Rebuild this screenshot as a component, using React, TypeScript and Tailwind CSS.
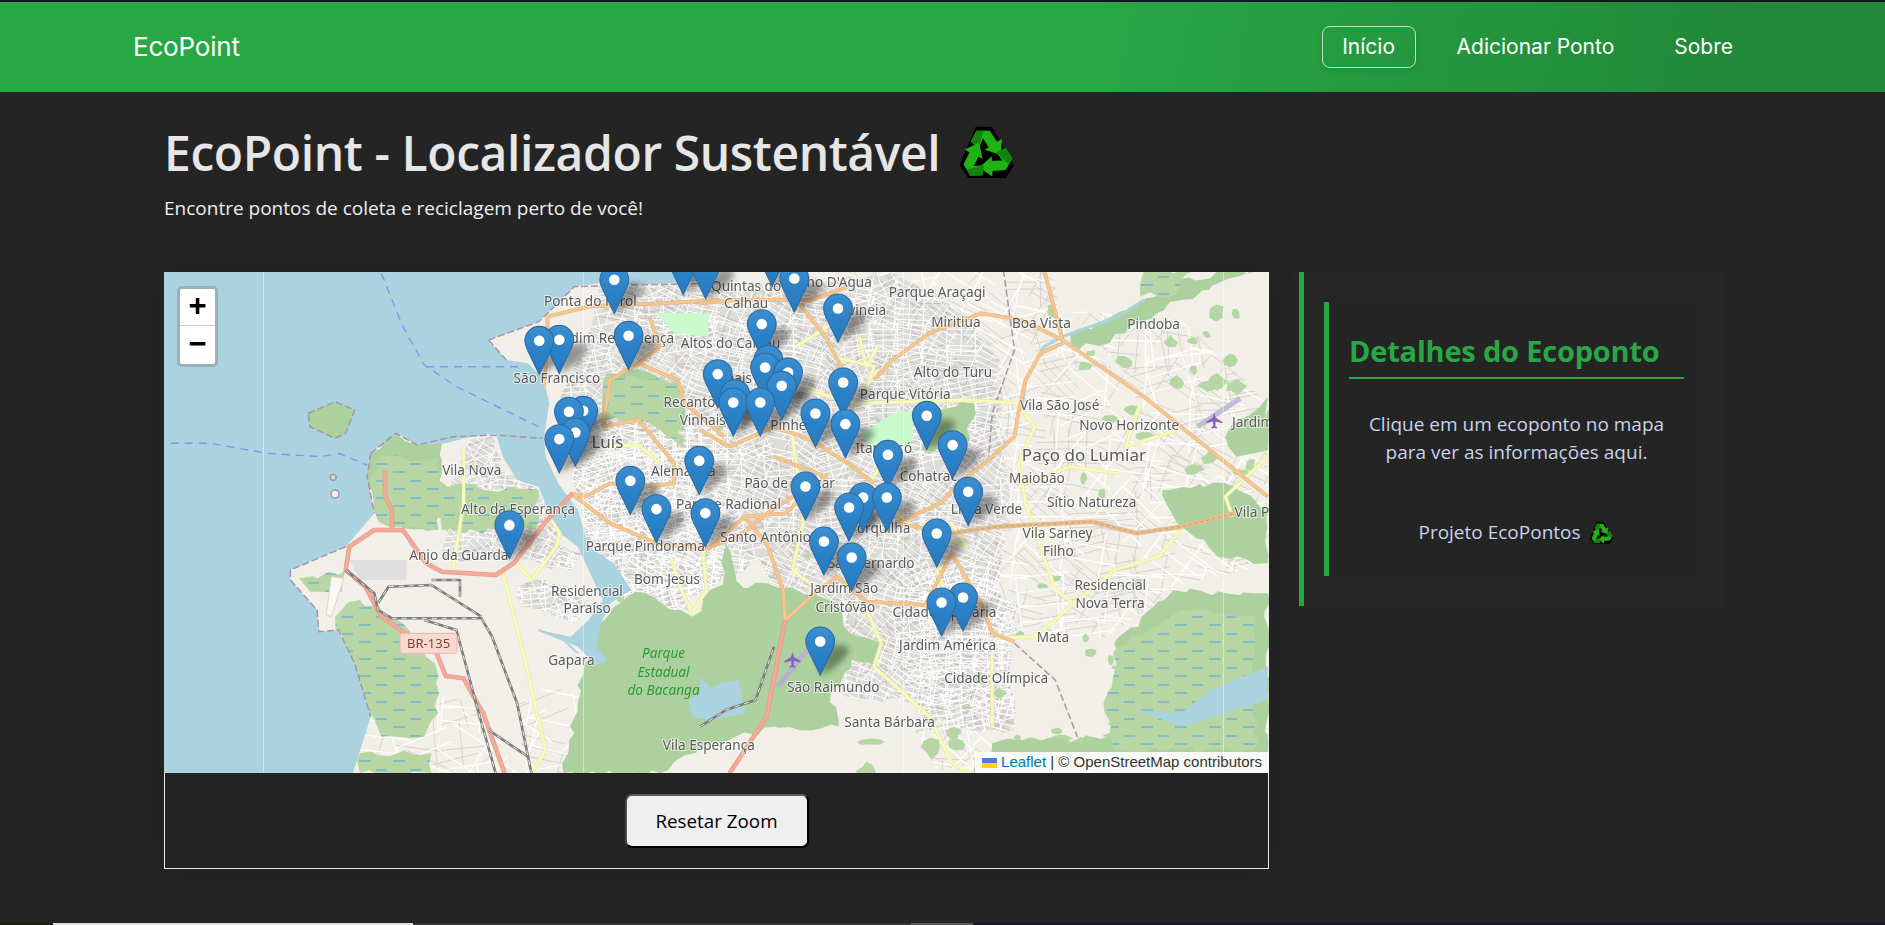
import React from "react";

type Pt = number[];
const z4 = (a: Pt) => { const o: string[] = []; for (let i = 0; i < a.length; i += 2) o.push(`${(160 + a[i] / 2.8).toFixed(1)},${(270 + a[i + 1] / 3).toFixed(1)}`); return o.join(" "); };
const z5 = (a: Pt) => { const o: string[] = []; for (let i = 0; i < a.length; i += 2) o.push(`${(700 + a[i] / 2.703).toFixed(1)},${(270 + a[i + 1] / 3).toFixed(1)}`); return o.join(" "); };
const X4 = (x: number) => 160 + x / 2.8;
const X5 = (x: number) => 700 + x / 2.703;
const Y = (y: number) => 270 + y / 3;

function makeRng(seed: number) {
  let s = seed;
  return () => { s = (s * 16807) % 2147483647; return (s - 1) / 2147483646; };
}
const rr = makeRng(4242);
function rough(points: string, step = 9, amp = 3) {
  const n = points.trim().split(/[\s,]+/).map(Number);
  const out: string[] = [];
  const c = n.length / 2;
  for (let i = 0; i < c; i++) {
    const x0 = n[2 * i], y0 = n[2 * i + 1];
    const x1 = n[(2 * i + 2) % n.length], y1 = n[(2 * i + 3) % n.length];
    const d = Math.hypot(x1 - x0, y1 - y0);
    const k = Math.max(1, Math.floor(d / step));
    for (let j = 0; j < k; j++) {
      const t = j / k;
      const jx = j === 0 ? 0 : (rr() - 0.5) * 2 * amp;
      const jy = j === 0 ? 0 : (rr() - 0.5) * 2 * amp;
      out.push(`${(x0 + (x1 - x0) * t + jx).toFixed(1)},${(y0 + (y1 - y0) * t + jy).toFixed(1)}`);
    }
  }
  return out.join(" ");
}
function streets(x0: number, y0: number, x1: number, y1: number, cell: number, gap: number, seed: number, skip: number) {
  const r = makeRng(seed);
  let d = "";
  for (let cy = y0; cy < y1; cy += cell) {
    for (let cx = x0; cx < x1; cx += cell) {
      const a = (r() * 70 - 25) * Math.PI / 180;
      const ca = Math.cos(a), sa = Math.sin(a);
      const mx = cx + cell / 2, my = cy + cell / 2, h = cell * 0.62;
      for (let u = -h; u <= h; u += gap) {
        if (r() < skip) continue;
        d += `M${(mx + ca * -h - sa * u).toFixed(1)} ${(my + sa * -h + ca * u).toFixed(1)}L${(mx + ca * h - sa * u).toFixed(1)} ${(my + sa * h + ca * u).toFixed(1)}`;
      }
      for (let u = -h; u <= h; u += gap * 2.6) {
        if (r() < skip) continue;
        d += `M${(mx - sa * -h + ca * u).toFixed(1)} ${(my + ca * -h + sa * u).toFixed(1)}L${(mx - sa * h + ca * u).toFixed(1)} ${(my + ca * h + sa * u).toFixed(1)}`;
      }
    }
  }
  return d;
}
function blobs(x0: number, y0: number, x1: number, y1: number, n: number, seed: number, size: number) {
  const r = makeRng(seed);
  const out: string[] = [];
  for (let i = 0; i < n; i++) {
    const cx = x0 + r() * (x1 - x0), cy = y0 + r() * (y1 - y0);
    const w = size * (0.5 + r()), h = size * (0.4 + r() * 0.8), k = 8;
    const p: string[] = [];
    for (let j = 0; j < k; j++) {
      const t = (j / k) * Math.PI * 2, q = 0.6 + r() * 0.6;
      p.push(`${(cx + Math.cos(t) * w * q).toFixed(1)},${(cy + Math.sin(t) * h * q).toFixed(1)}`);
    }
    out.push(p.join(" "));
  }
  return out;
}

const water = "#aad3df";

const waterPoly = z4([0,0, 1557,0, 1540,30, 1430,40, 1320,45, 1230,40, 1160,50, 1085,130, 1060,155, 920,210, 970,270, 1030,280, 1075,330, 1090,400, 1075,500, 1080,560, 1115,640, 1170,720, 1200,830, 1270,880, 1320,960, 1260,1000, 1235,1060, 1220,1130, 1255,1170, 1220,1185, 1170,1130, 1060,1080, 1150,1100, 1200,1050, 1240,990, 1200,900, 1170,830, 1120,790, 1090,730, 1060,650, 1000,630, 960,560, 940,490, 870,500, 800,520, 720,525, 660,490, 590,550, 580,620, 600,730, 520,830, 365,900, 365,930, 440,1020, 445,1085, 500,1080, 545,1180, 590,1340, 540,1510, 0,1510]);

const urban: string[] = [
  "600,285 716,285 900,275 960,310 1000,360 1010,500 990,640 960,700 850,700 790,640 760,560 690,600 650,620 600,590 580,510 560,400 590,330",
  z4([860,510, 940,495, 950,600, 1050,640, 1100,720, 1110,820, 1180,850, 1150,900, 1000,870, 790,870, 800,700]),
  z4([1240,860, 1340,760, 1480,830, 1520,900, 1480,1020, 1370,1000, 1290,930]),
  z5([580,900, 860,1000, 840,1140, 850,1380, 590,1380, 560,1100]),
  z4([1000,950, 1080,930, 1200,990, 1160,1060, 1010,1010]),
].map((p) => rough(p, 10, 3.5));
const suburb: string[] = [
  z5([400,0, 950,0, 990,200, 1150,320, 1300,480, 1535,700, 1535,880, 1300,950, 1100,1100, 900,1100, 800,1000, 750,800, 500,300]),
  z5([490,1130, 800,1380, 780,1500, 640,1500, 560,1340]),
  z4([1000,1300, 1100,1240, 1200,1290, 1140,1510, 1020,1510]),
  z4([560,1240, 900,1300, 1000,1510, 560,1510]),
  z5([1000,120, 1300,150, 1535,400, 1535,650, 1300,500]),
];
const wet: string[] = [
  z4([420,380, 550,365, 555,470, 500,500, 420,460]),
  z4([600,570, 780,560, 770,780, 690,770, 640,770, 600,720]),
  z4([730,640, 1060,660, 1050,780, 790,780]),
  z4([390,925, 520,900, 510,965, 420,965]),
  z4([490,1040, 560,990, 680,1060, 770,1180, 780,1330, 740,1400, 620,1400, 560,1300]),
  z4([1250,310, 1450,340, 1470,480, 1360,450, 1240,450]),
  z4([1260,385, 1400,385, 1470,510, 1460,530, 1400,480, 1300,430]),
  z5([1130,1130, 1300,1020, 1500,1040, 1500,1440, 1120,1440, 1090,1300]),
  z5([1200,0, 1340,0, 1290,70, 1190,80]),
  z4([560,1450, 760,1450, 760,1510, 560,1510]),
].map((p) => rough(p, 9, 4));
const forest: string[] = [
  z4([590,550, 660,490, 720,525, 790,520, 780,780, 680,775, 600,730, 580,620]),
  z4([1190,1180, 1235,1060, 1330,965, 1430,1020, 1490,1040, 1540,960, 1700,940, 1900,1000, 1960,1140, 1880,1260, 1900,1370, 1720,1370, 1520,1430, 1400,1510, 1130,1510, 1170,1300]),
  z5([265,1050, 490,1120, 470,1180, 340,1170, 220,1260, 200,1340, 180,1300, 230,1060]),
  z5([1120,1120, 1280,960, 1500,970, 1535,970, 1535,1510, 1300,1510, 800,1510, 790,1420, 1100,1400, 1160,1280]),
  z5([1000,190, 1180,110, 1290,30, 1450,0, 1510,0, 1300,90, 1150,190, 1020,240]),
  z5([1250,660, 1420,640, 1535,720, 1535,880, 1400,860, 1290,760]),
  z5([1420,500, 1535,380, 1535,540, 1450,560]),
  z5([580,420, 740,400, 730,510, 600,540]),
  z4([1250,310, 1340,300, 1450,340, 1470,460, 1340,440, 1240,450]),
  z5([70,820, 130,1000, 60,950]),
  z4([415,430, 490,395, 545,420, 520,490, 490,505, 460,490, 420,470]),
].map((p) => rough(p, 9, 4));
const patches = [
  ...blobs(X5(950), Y(30), 1269, Y(700), 34, 77, 7),
  ...blobs(X5(450), Y(1380), 1269, 772, 22, 91, 8),
  ...blobs(600, 300, 980, 680, 26, 13, 4),
  ...blobs(X5(700), Y(880), X5(1200), Y(1400), 16, 53, 5),
];

const pink: string[] = [
  z4([965,1510, 905,1330, 850,1225, 800,1218, 775,1150, 680,1085, 620,1040, 575,950, 520,900, 530,830, 600,780, 680,780, 745,880, 790,905, 940,915, 990,880, 1080,755, 1155,670]),
  z4([630,600, 630,680, 650,720, 650,775]),
  z5([80,1510, 180,1340, 230,1050]),
];
const orange: string[] = [
  z4([1075,350, 1085,220, 1085,140, 1200,110, 1400,100, 1568,90]),
  z4([1240,470, 1260,330, 1340,280, 1450,330, 1470,400, 1580,500]),
  z4([1240,470, 1340,450, 1440,580, 1440,640, 1350,650, 1260,640, 1190,680, 1150,670]),
  z4([1150,670, 1260,760, 1390,820, 1530,835, 1620,800, 1700,730, 1800,660]),
  z4([1340,280, 1400,230, 1370,140]),
  z5([0,100, 100,90, 300,90, 400,50]),
  z5([260,90, 340,200, 385,300]),
  z5([470,330, 520,270, 620,190, 760,130, 870,150, 980,210]),
  z5([930,0, 980,210, 1200,380, 1535,680]),
  z5([980,220, 920,250, 880,330, 860,430, 850,500, 780,570, 700,640, 650,700, 530,760]),
  z5([0,480, 80,530, 200,470, 300,510, 400,580, 470,640]),
  z5([200,560, 340,620, 230,730, 120,740, 30,830, 0,840]),
  z5([120,740, 180,820, 225,960, 230,1050]),
  z5([230,1050, 300,980, 370,920, 450,995, 610,1005, 680,850]),
  z5([680,850, 760,1000, 790,1090, 850,1115]),
  z5([530,760, 680,790]),
];
const yellow: string[] = [
  z4([960,910, 1010,1120, 1080,1440, 1040,1510]),
  z4([850,540, 850,700, 820,900]),
  z4([1000,880, 1040,930, 1110,830, 1120,790, 1095,750]),
  z4([1430,860, 1460,960, 1490,1030, 1530,960, 1520,840]),
  z4([1250,530, 1340,525, 1400,580]),
  z5([260,230, 330,180, 400,130]),
  z5([360,260, 470,290, 450,360]),
  z5([290,360, 420,400, 730,390, 860,400]),
  z5([870,420, 905,470, 860,580, 880,700, 930,860, 960,960, 1010,1000, 950,1060, 900,1100, 800,1105]),
  z5([660,890, 640,900, 660,960]),
  z5([450,1020, 490,1120, 470,1190, 620,1340, 680,1480, 730,1510]),
  z5([790,1150, 790,1370]),
  z5([1010,1000, 1120,900, 1240,860, 1300,780]),
  z5([1535,560, 1420,680, 1440,740]),
  z5([860,650, 1000,590, 1130,610]),
  z5([1190,400, 1150,530, 1290,480]),
  z5([250,500, 280,750, 250,900, 320,960]),
  z5([430,200, 450,290, 480,230]),
  z5([490,580, 460,640, 560,760, 720,830, 680,760]),
];
const rail: string[] = [
  z4([520,900, 600,970, 610,1020, 650,1045, 900,1045, 930,1100, 1000,1300, 1040,1510]),
  z4([610,1000, 640,950, 760,945, 900,1040]),
  z4([740,1050, 830,1080, 890,1320, 940,1510]),
  z4([920,1380, 1030,1460]),
  z4([760,930, 840,930, 840,980]),
  z5([0,1370, 70,1320, 150,1290, 200,1130]),
];
const maritime: string[] = [
  z4([620,10, 680,170, 740,285, 830,350, 1060,470]),
  z4([745,290, 1020,290]),
  z4([30,520, 140,520, 300,550, 450,560, 500,550, 580,585]),
];
const boundary: string[] = [
  z4([590,550, 660,490, 720,525, 820,500, 940,495, 1070,505]),
  z4([415,430, 490,395, 545,420, 520,490, 490,505, 460,490, 420,470, 415,430]),
  z4([920,210, 1060,155, 1085,130, 1160,50, 1320,45, 1568,40]),
  z4([920,210, 970,270]),
  z4([590,550, 580,620, 600,730]),
  z4([520,830, 365,900, 365,930, 440,1020, 445,1085, 500,1080, 545,1180, 590,1340]),
  z5([820,0, 850,240, 790,430, 780,560]),
  z5([850,1120, 960,1230, 1020,1400]),
];

type L = [string, number, number, number?];
const labels4: L[] = [
  ["Ponta do Farol",1075,108],["Jardim Renascença",1103,220],["Altos do Calhau",1458,235],["São Francisco",990,338],
  ["Recanto dos",1410,412],["Vinhais",1455,465],["São Luís",1114,535,17],["Vila Nova",790,615],["Alto da Esperança",843,733],
  ["Anjo da Guarda",698,870],["Alemanha",1375,618],["Parque Pindorama",1192,842],["Bom Jesus",1327,942],["Residencial",1095,977],
  ["Paraíso",1130,1030],["Gapara",1087,1185],["Parque Radional",1445,718],["Vila Esperança",1408,1440],
];
const labels5: L[] = [
  ["Olho D'Agua",250,50],["Quintas do",30,62],["Calhau",65,115],["Parque Araçagi",510,80],["Divineia",365,135],["Miritiua",625,170],
  ["Boa Vista",843,175],["Pindoba",1155,178],["Alto do Turu",578,320],["Parque Vitória",432,388],["Vila São José",865,420],
  ["Novo Horizonte",1025,480],["Jardim",1438,472],["Pinheiro",190,480],["Itapiracó",420,550],["Cohatrac",540,633],["Maiobão",835,640],
  ["Sítio Natureza",938,710],["Lima Verde",678,733],["Vila Palmeira",1445,742],["Pão de Açúcar",120,655],["Forquilha",405,790],
  ["Santo Antônio",55,815],["Vila Sarney",872,803],["Filho",927,857],["São Bernardo",345,895],["Jardim São",298,970],["Cristóvão",312,1025],
  ["Cidade Operária",520,1040],["Residencial",1012,960],["Nova Terra",1015,1013],["Mata",910,1115],["Jardim América",538,1140],
  ["Cidade Olímpica",660,1240],["São Raimundo",235,1265],["Santa Bárbara",390,1370],["Paço do Lumiar",870,572,17],["bais",70,340],
];

const pinsF: [number, number][] = [
  [X4(978),Y(868)],[X4(1062),Y(315)],[X4(1118),Y(312)],[X4(1312),Y(300)],[X4(1272),Y(132)],[X4(1465),Y(75)],[X4(1528),Y(88)],
  [X4(1185),Y(525)],[X4(1145),Y(528)],[X4(1163),Y(590)],[X4(1118),Y(610)],[X4(1317),Y(735)],[X4(1510),Y(675)],[X4(1390),Y(820)],[X4(1527),Y(832)],
  [X5(195),Y(50)],[X5(255),Y(128)],[X5(373),Y(218)],[X5(167),Y(265)],[X5(48),Y(415)],[X5(95),Y(475)],[X5(90),Y(500)],[X5(163),Y(500)],
  [X5(185),Y(372)],[X5(176),Y(395)],[X5(238),Y(410)],[X5(221),Y(450)],[X5(387),Y(440)],[X5(312),Y(533)],[X5(393),Y(565)],[X5(613),Y(540)],
  [X5(683),Y(628)],[X5(508),Y(657)],[X5(725),Y(768)],[X5(285),Y(752)],[X5(441),Y(785)],[X5(505),Y(785)],[X5(403),Y(815)],[X5(640),Y(893)],
  [X5(335),Y(917)],[X5(410),Y(965)],[X5(711),Y(1085)],[X5(653),Y(1100)],[X5(325),Y(1217)],
];
const pins = [...pinsF].sort((a, b) => a[1] - b[1]);

const urbanWhite = streets(560, 275, 1010, 710, 26, 5.5, 11, 0.12) + streets(X4(790), Y(495), X4(1520), Y(1060), 26, 5.5, 23, 0.15) + streets(X5(560), Y(900), X5(860), Y(1380), 26, 6, 37, 0.12);
const urbanGrey = streets(560, 275, 1010, 710, 30, 8, 47, 0.45) + streets(X4(790), Y(495), X4(1520), Y(1060), 30, 8, 59, 0.45) + streets(X5(560), Y(900), X5(860), Y(1380), 30, 8, 61, 0.4);
const suburbWhite = streets(X5(400), 272, 1269, Y(1100), 44, 15, 71, 0.35) + streets(X4(560), Y(1240), X5(800), 773, 44, 15, 83, 0.35);
const suburbGrey = streets(X5(400), 272, 1269, Y(1100), 32, 7, 97, 0.62) + streets(X4(560), Y(1240), X5(800), 773, 40, 10, 103, 0.7);

function Plane({ x, y }: { x: number; y: number }) {
  return (
    <g transform={`translate(${x} ${y})`} fill="#8461C4">
      <path d="M0 -8 L1.4 -3 L8 1 L8 2.6 L1.4 0.8 L1 5 L3 6.8 L3 7.8 L0 7 L-3 7.8 L-3 6.8 L-1 5 L-1.4 0.8 L-8 2.6 L-8 1 L-1.4 -3 Z" />
    </g>
  );
}

function MapArt() {
  return (
    <svg viewBox="164 272 1105 501" width="1105" height="501" className="block">
      <defs>
        <clipPath id="uc">{urban.map((p, i) => <polygon key={i} points={p} />)}</clipPath>
        <clipPath id="sc">{suburb.map((p, i) => <polygon key={i} points={p} />)}</clipPath>
        <pattern id="wet" width="34" height="17" patternUnits="userSpaceOnUse">
          <rect width="34" height="17" fill="#b8d6a3" />
          <path d="M2 5H13M19 13H31" stroke="#4ea6ee" strokeWidth="1.2" />
        </pattern>
        <filter id="soft" x="-2%" y="-2%" width="104%" height="104%"><feGaussianBlur stdDeviation="0.65" /></filter>
        <filter id="sh" x="-50%" y="-50%" width="200%" height="200%"><feGaussianBlur stdDeviation="3" /></filter>
        <filter id="tiny" x="-5%" y="-5%" width="110%" height="110%"><feGaussianBlur stdDeviation="0.3" /></filter>
        <linearGradient id="pinFill" x1="0" y1="0" x2="0" y2="1">
          <stop offset="0" stopColor="#3a8fd0" />
          <stop offset="0.55" stopColor="#2c80c6" />
          <stop offset="1" stopColor="#2a7ac0" />
        </linearGradient>
      </defs>
      <g filter="url(#soft)">
        <rect x="164" y="272" width="1105" height="501" fill="#f2efe9" />
        <g clipPath="url(#sc)">
          <path d={suburbGrey} stroke="#d6d3cf" strokeWidth="1" fill="none" />
          <path d={suburbWhite} stroke="#ffffff" strokeWidth="1.2" fill="none" />
        </g>
        {urban.map((p, i) => <polygon key={i} points={p} fill="#dedcd9" />)}
        <g clipPath="url(#uc)">
          <path d={urbanGrey} stroke="#c4c2be" strokeWidth="1.1" fill="none" />
          <path d={urbanWhite} stroke="#ffffff" strokeWidth="1" fill="none" />
        </g>
        {patches.map((p, i) => <polygon key={i} points={p} fill="#b6d6a6" />)}
        {forest.map((p, i) => <polygon key={i} points={p} fill="#add19e" />)}
        {wet.map((p, i) => <polygon key={i} points={p} fill="url(#wet)" />)}
        <polygon points={z5([440,490, 520,430, 580,420, 570,530, 450,520])} fill="#c8facc" />
        <polygon points={z4([1390,130, 1535,130, 1535,200, 1440,190])} fill="#c8facc" />
        <polygon points={z4([530,870, 690,870, 690,930, 560,930])} fill="#dfdfdf" />
        <polygon points={waterPoly} fill={water} />
        <polygon points={z4([415,430, 490,395, 545,420, 520,490, 490,505, 460,490, 420,470])} fill="#add19e" />
        <polygon points={z5([1535,1190, 1380,1260, 1300,1330, 1180,1320, 1300,1370, 1535,1290])} fill={water} />
        <polygon points={z4([1480,1290, 1568,1240, 1620,1230, 1640,1330, 1540,1350, 1490,1340])} fill={water} />
        <polygon points={z5([0,1220, 60,1290, 60,1340, 0,1330])} fill={water} />
        <polyline points={z5([870,420, 880,330, 930,230, 980,200, 1130,140, 1200,90])} fill="none" stroke={water} strokeWidth="3" />
        <polyline points={z4([1060,1080, 1130,1110, 1170,1150])} fill="none" stroke={water} strokeWidth="2" />
        <polyline points={z5([210,1250, 290,1140])} fill="none" stroke="#b7b3cf" strokeWidth="5" />
        <polyline points={z5([1345,470, 1460,385])} fill="none" stroke="#c0bdd6" strokeWidth="5" />
        <circle cx={X4(485)} cy={Y(622)} r="3" fill="#c8e0c8" stroke="#a48fa8" strokeWidth="1.4" />
        <circle cx={X4(490)} cy={Y(672)} r="4" fill="#f2efe9" stroke="#a48fa8" strokeWidth="1.4" />
        <polygon points={z4([480,920, 515,925, 480,1040, 465,1035])} fill="#f8f7f4" stroke="#d9d6d2" strokeWidth="1" />
        {boundary.map((p, i) => <polyline key={i} points={p} fill="none" stroke="#a695ac" strokeWidth="1.5" strokeDasharray="7 3" />)}
        {maritime.map((p, i) => <polyline key={i} points={p} fill="none" stroke="#8298f0" strokeWidth="1.4" strokeDasharray="8 6" />)}
        {yellow.map((p, i) => <polyline key={i} points={p} fill="none" stroke="#e8e59a" strokeWidth="3.8" strokeLinejoin="round" />)}
        {yellow.map((p, i) => <polyline key={i} points={p} fill="none" stroke="#f7fabf" strokeWidth="2.8" strokeLinejoin="round" />)}
        {orange.map((p, i) => <polyline key={i} points={p} fill="none" stroke="#e6b27a" strokeWidth="3.8" strokeLinejoin="round" />)}
        {orange.map((p, i) => <polyline key={i} points={p} fill="none" stroke="#f5c68d" strokeWidth="2.8" strokeLinejoin="round" />)}
        <polyline points={z5([680,790, 800,770, 1060,755, 1180,790, 1300,770, 1445,730])} fill="none" stroke="#e8bd8c" strokeWidth="4.5" strokeLinejoin="round" />
        <polyline points={z5([680,790, 800,770, 1060,755, 1180,790, 1300,770, 1445,730])} fill="none" stroke="#bfa68a" strokeWidth="1.2" strokeDasharray="3 3" />
        {pink.map((p, i) => <polyline key={i} points={p} fill="none" stroke="#e8998a" strokeWidth="4.6" strokeLinejoin="round" />)}
        {pink.map((p, i) => <polyline key={i} points={p} fill="none" stroke="#f2ab98" strokeWidth="3.2" strokeLinejoin="round" />)}
        {rail.map((p, i) => <polyline key={i} points={p} fill="none" stroke="#7d7d7d" strokeWidth="2.6" strokeLinejoin="round" />)}
        {rail.map((p, i) => <polyline key={i} points={p} fill="none" stroke="#e8e8e8" strokeWidth="1" strokeDasharray="5 5" />)}
        <Plane x={X5(1390)} y={Y(452)} />
        <Plane x={X5(250)} y={Y(1170)} />
        <rect x={X4(672)} y={Y(1090)} width={57} height={20} rx="2.5" fill="#f6d9d0" stroke="#eeb5a6" strokeWidth="1" />
        <text x={X4(752)} y={Y(1134)} textAnchor="middle" fontSize="13" fill="#8c3d2c" fontFamily="'Noto Sans',sans-serif">BR-135</text>
        <g fontFamily="'Noto Sans',sans-serif" fill="#5a5a5a" stroke="#ffffff" strokeOpacity="0.6" strokeWidth="2.2" paintOrder="stroke" strokeLinejoin="round">
          {labels4.map(([t, x, y, s], i) => <text key={i} x={X4(x)} y={Y(y)} fontSize={s ?? 13.6}>{t}</text>)}
          {labels5.map(([t, x, y, s], i) => <text key={i} x={X5(x)} y={Y(y)} fontSize={s ?? 13.6}>{t}</text>)}
        </g>
        <g fontFamily="'Noto Sans',sans-serif" fill="#2f9a3a" fontStyle="italic" fontSize="13.6" textAnchor="middle">
          <text x={X4(1410)} y={Y(1165)}>Parque</text>
          <text x={X4(1410)} y={Y(1220)}>Estadual</text>
          <text x={X4(1410)} y={Y(1275)}>do Bacanga</text>
        </g>
        {[263.5, 583.6, 903.5, 1223.5].map((x) => <line key={x} x1={x} x2={x} y1="272" y2="773" stroke="#ffffff" strokeOpacity="0.45" strokeWidth="1" />)}
      </g>
      <g filter="url(#sh)">
        {pins.map(([x, y], i) => (
          <path key={i} d={`M${x} ${y} L${x + 8} ${y - 26} Q${x + 20} ${y - 36} ${x + 29} ${y - 26} Q${x + 24} ${y - 12} ${x} ${y} Z`} fill="#000" fillOpacity="0.38" />
        ))}
      </g>
      <g filter="url(#tiny)">
        {pins.map(([x, y], i) => (
          <g key={i} transform={`translate(${x - 15} ${y - 49.2}) scale(1.2)`}>
            <path d="M12.5 0.5C5.9 0.5 0.5 5.9 0.5 12.5 0.5 15 1.4 17.6 2.6 20 5.2 25.6 12.5 40.5 12.5 40.5S19.8 25.6 22.4 20C23.6 17.6 24.5 15 24.5 12.5 24.5 5.9 19.1 0.5 12.5 0.5Z" fill="url(#pinFill)" stroke="#2a6ba3" strokeWidth="0.9" />
            <circle cx="12.5" cy="12.5" r="4.4" fill="#ffffff" />
          </g>
        ))}
      </g>
    </svg>
  );
}

function RecycleEmoji({ className }: { className: string }) {
  const arrow = "M85 47 L125 47 L147 80 L162 72 L158 120 L110 104 L122 97 L105 70 L93 98 L68 80 Z";
  const rots = [0, 120, 240];
  return (
    <svg viewBox="0 0 210 210" className={className}>
      <polygon points="85,38 130,38 195,150 172,186 62,186 38,150" fill="#000" stroke="#000" strokeWidth="6" strokeLinejoin="round" />
      {rots.map((r) => (
        <g key={r} transform={`rotate(${r} 115 120)`}>
          <path d={arrow} fill="#1fb313" />
          <path d="M85 47 L106 47 L93 98 L68 80 Z" fill="#14820f" />
        </g>
      ))}
    </svg>
  );
}

export default function App() {
  return (
    <div className="h-[925px] w-[1885px] overflow-hidden flex flex-col bg-[#242424] font-['Open_Sans',sans-serif]">
      <div className="h-[2px] shrink-0 bg-[#13171c]" />
      <nav className="h-[90px] shrink-0 flex items-center justify-between pl-[133px] pr-[152px] bg-[linear-gradient(100deg,#28a745_58%,#218838_93%,#238c3b_100%)] text-white font-['Inter',sans-serif]">
        <a className="text-[26px] leading-none tracking-[-0.2px]">EcoPoint</a>
        <ul className="flex items-center text-[21px] font-normal">
          <li className="h-[42px] w-[94px] flex items-center justify-center border border-white/70 rounded-[8px] shadow-[0_2px_6px_rgba(0,0,0,0.1)]">Início</li>
          <li className="ml-[41px]">Adicionar Ponto</li>
          <li className="ml-[60px]">Sobre</li>
        </ul>
      </nav>
      <main className="flex-1 pl-[164px] pt-[30px] min-h-0">
        <div className="flex items-center h-[62px]">
          <h1 className="text-[48px] leading-none font-semibold text-[#e6e6e6] tracking-[-0.4px]">EcoPoint - Localizador Sustentável</h1>
          <RecycleEmoji className="w-[70px] h-[70px] shrink-0 ml-[8px] mt-[-6px]" />
        </div>
        <p className="mt-[11px] text-[19px] leading-[26px] text-[#eeeeee]">Encontre pontos de coleta e reciclagem perto de você!</p>
        <div className="flex items-start mt-[51px]">
          <section className="w-[1105px] h-[597px] border border-white/90 bg-[#232323] flex flex-col relative shadow-[0_0_30px_rgba(0,0,0,0.1)]">
            <div className="relative h-[501px] overflow-hidden -mx-px -mt-px">
              <MapArt />
              <div className="absolute left-[13px] top-[14px] w-[41px] rounded-[5px] border-[3px] border-[#7f9ca5]/80 bg-white flex flex-col font-['Liberation_Mono',monospace] font-bold text-black">
                <span className="h-[37px] flex items-center justify-center text-[31px] leading-none border-b border-[#cccccc]">+</span>
                <span className="h-[38px] flex items-center justify-center text-[31px] leading-none">−</span>
              </div>
              <div className="absolute right-0 bottom-0 h-[21px] w-[294px] bg-white/90 flex items-center justify-end pr-[7px] text-[15px] text-[#333] font-['Liberation_Sans',sans-serif] whitespace-nowrap">
                <svg viewBox="0 0 12 8" className="w-[15px] h-[10px] mr-[4px]">
                  <rect width="12" height="4" fill="#4C7BE1" />
                  <rect y="4" width="12" height="4" fill="#FFD500" />
                </svg>
                <span className="text-[#0078a8]">Leaflet</span>
                <span>&nbsp;| © OpenStreetMap contributors</span>
              </div>
            </div>
            <div className="flex-1 flex items-start justify-center pt-[21px]">
              <button className="w-[184px] h-[54px] rounded-[7px] bg-[#efefef] border-2 border-t-[#5a5a5a] border-l-[#4c4c4c] border-r-[#000000] border-b-[#000000] text-black text-[18.8px]">Resetar Zoom</button>
            </div>
          </section>
          <aside className="ml-[30px] w-[424px] h-[334px] border-l-[5px] border-[#28a745] bg-[#252625] shadow-[0_0_20px_rgba(40,167,69,0.04)] pl-[20px] pt-[30px]">
            <div className="w-[376px] h-[274px] border-l-[5px] border-[#28a745] bg-[#242424] shadow-[0_0_16px_rgba(40,167,69,0.03)] pl-[20px] pr-[16px] pt-[30px]">
              <h2 className="text-[29px] leading-[38px] font-bold text-[#28a745] border-b-2 border-[#28a745] pb-[7px] tracking-[-0.2px]">Detalhes do Ecoponto</h2>
              <p className="mt-[31px] text-center text-[19px] leading-[28px] text-[#c6d3ea]">Clique em um ecoponto no mapa<br />para ver as informações aqui.</p>
              <div className="mt-[51px] flex items-center justify-center text-[19px] leading-[28px] text-[#c6d3ea]">
                <span>Projeto EcoPontos</span>
                <RecycleEmoji className="w-[30px] h-[30px] ml-[4px] shrink-0" />
              </div>
            </div>
          </aside>
        </div>
      </main>
      <div className="h-[2px] shrink-0 flex">
        <div className="w-[53px] bg-[#1f1d14]" />
        <div className="w-[360px] bg-[#dddddd]" />
        <div className="w-[498px] bg-[#3a3630]" />
        <div className="w-[62px] bg-[#5a5a5a]" />
        <div className="flex-1 bg-[#141a22]" />
      </div>
    </div>
  );
}
